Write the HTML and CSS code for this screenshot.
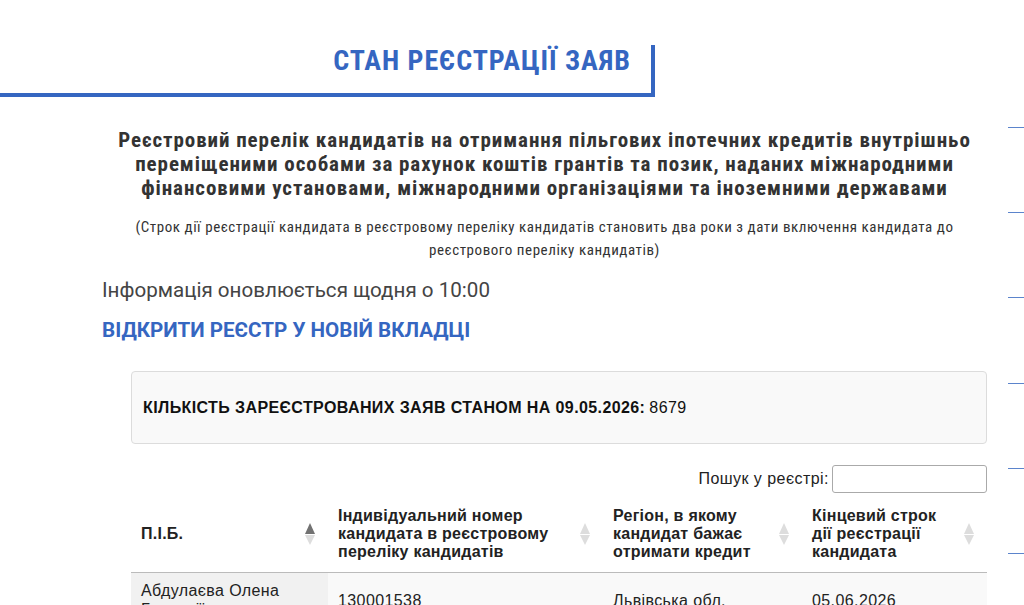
FILE: index.html
```html
<!DOCTYPE html>
<html lang="uk">
<head>
<meta charset="utf-8">
<link rel="stylesheet" href="styles.css">
</head>
<body>
<div class="page">
  <div class="title-bar">
    <h1 class="title">СТАН РЕЄСТРАЦІЇ ЗАЯВ</h1>
  </div>
  <div class="content">
    <h2 class="lead">Реєстровий перелік кандидатів на отримання пільгових іпотечних кредитів внутрішньо переміщеними особами за рахунок коштів грантів та позик, наданих міжнародними фінансовими установами, міжнародними організаціями та іноземними державами</h2>
    <p class="note">(Строк дії реєстрації кандидата в реєстровому переліку кандидатів становить два роки з дати включення кандидата до реєстрового переліку кандидатів)</p>
    <p class="info">Інформація оновлюється щодня о 10:00</p>
    <a class="open-link" href="#">ВІДКРИТИ РЕЄСТР У НОВІЙ ВКЛАДЦІ</a>
    <div class="registry">
      <div class="count-box"><b>КІЛЬКІСТЬ ЗАРЕЄСТРОВАНИХ ЗАЯВ СТАНОМ НА 09.05.2026:</b> 8679</div>
      <div class="search"><label>Пошук у реєстрі:</label><input type="text"></div>
      <table class="table">
        <thead>
          <tr>
            <th class="c1"><div class="th-in"><span>П.І.Б.</span><i class="sort asc"></i></div></th>
            <th class="c2"><div class="th-in"><span>Індивідуальний номер кандидата в реєстровому переліку кандидатів</span><i class="sort"></i></div></th>
            <th class="c3"><div class="th-in"><span>Регіон, в якому кандидат бажає отримати кредит</span><i class="sort"></i></div></th>
            <th class="c4"><div class="th-in"><span>Кінцевий строк дії реєстрації кандидата</span><i class="sort"></i></div></th>
          </tr>
        </thead>
        <tbody>
          <tr>
            <td class="sorted">Абдулаєва Олена Геннадіївна</td>
            <td>130001538</td>
            <td>Львівська обл.</td>
            <td>05.06.2026</td>
          </tr>
        </tbody>
      </table>
    </div>
  </div>
  <div class="side-marks">
    <span class="mark"></span><span class="mark"></span><span class="mark"></span><span class="mark"></span><span class="mark"></span><span class="mark"></span>
  </div>
</div>
</body>
</html>
```
FILE: styles.css
```css
* { box-sizing: border-box; }
html, body { margin: 0; padding: 0; background: #fff; }
body { font-family: Roboto, "Liberation Sans", sans-serif; color: #333; overflow: hidden; }
.page { position: relative; width: 1024px; height: 605px; overflow: hidden; }

.title-bar {
  width: 655px;
  margin-top: 45px;
  height: 52px;
  border-right: 4px solid #3566c1;
  border-bottom: 4px solid #3566c1;
  display: flex;
  justify-content: flex-end;
  padding-right: 20px;
}
.title {
  margin: 0;
  font-family: "Liberation Sans Narrow", "Roboto Condensed", Roboto, sans-serif;
  font-weight: 700;
  font-size: 28px;
  line-height: 30px;
  padding-top: 1px;
  color: #3566c1;
  letter-spacing: 0.95px;
}

.content { width: 885px; margin-left: 102px; }
.lead {
  margin: 31px 0 0;
  text-align: center;
  font-family: "Liberation Sans Narrow", "Roboto Condensed", Roboto, sans-serif;
  font-weight: 700;
  font-size: 21px;
  line-height: 24px;
  letter-spacing: 0.93px;
  color: #333;
}
.note {
  margin: 16px 0 0;
  text-align: center;
  font-family: "Liberation Sans Narrow", "Roboto Condensed", Roboto, sans-serif;
  font-size: 15px;
  line-height: 23px;
  letter-spacing: 0.55px;
  color: #333;
}
.info {
  margin: 16px 0 0;
  font-family: Roboto, sans-serif;
  font-size: 20.6px;
  line-height: 24px;
  color: #444;
}
.open-link {
  display: inline-block;
  margin-top: 16px;
  font-family: Roboto, sans-serif;
  font-weight: 700;
  font-size: 20.6px;
  line-height: 24px;
  color: #3566c1;
  text-decoration: none;
}
.registry { margin-left: 29px; margin-top: 29px; font-family: "Liberation Sans", Arial, sans-serif; }
.count-box {
  height: 73px;
  background: #f9f9f9;
  border: 1px solid #dcdcdc;
  border-radius: 4px;
  padding: 0 11px;
  display: flex;
  align-items: center;
  font-family: "Liberation Sans Narrow", "Liberation Sans", sans-serif;
  font-size: 16px;
  letter-spacing: 0.4px;
  color: #111;
}
.count-box b { margin-right: 4px; }
.search {
  display: flex;
  justify-content: flex-end;
  align-items: center;
  margin-top: 21px;
  font-size: 16px;
  letter-spacing: 0.45px;
  color: #222;
}
.search label { margin-right: 3px; }
.search input {
  width: 155px;
  height: 28px;
  border: 1px solid #aaa;
  border-radius: 3px;
  background: #fff;
  padding: 0 4px;
}
.table { width: 100%; border-collapse: collapse; margin-top: 4px; font-size: 16px; color: #222; }
.table th {
  text-align: left;
  vertical-align: middle;
  padding: 10px 12px 11px 10px;
  border-bottom: 1px solid #bbb;
  font-weight: 700;
  line-height: 18px;
  letter-spacing: 0.25px;
}
.th-in { display: flex; align-items: center; justify-content: space-between; gap: 10px; }
.c1 { width: 197px; }
.c2 { width: 275px; }
.c3 { width: 199px; }
.sort { position: relative; width: 11px; height: 22px; flex: none; }
.sort::before, .sort::after {
  content: ""; position: absolute; left: 0;
  border-left: 5.5px solid transparent; border-right: 5.5px solid transparent;
}
.sort::before { top: 0; border-bottom: 11px solid #ddd; }
.sort::after { bottom: 0; border-top: 10px solid #ddd; }
.sort.asc::before { border-bottom-color: #727272; }
.table td {
  padding: 8px 10px;
  background: #f9f9f9;
  line-height: 19px;
  letter-spacing: 0.4px;
  vertical-align: middle;
}
.table td.sorted { background: #f1f1f1; }

.side-marks {
  position: absolute; right: 0; top: 127px;
  display: flex; flex-direction: column; gap: 84.2px;
}
.mark { display: block; width: 16px; height: 1px; background: #5b84cc; }
```
